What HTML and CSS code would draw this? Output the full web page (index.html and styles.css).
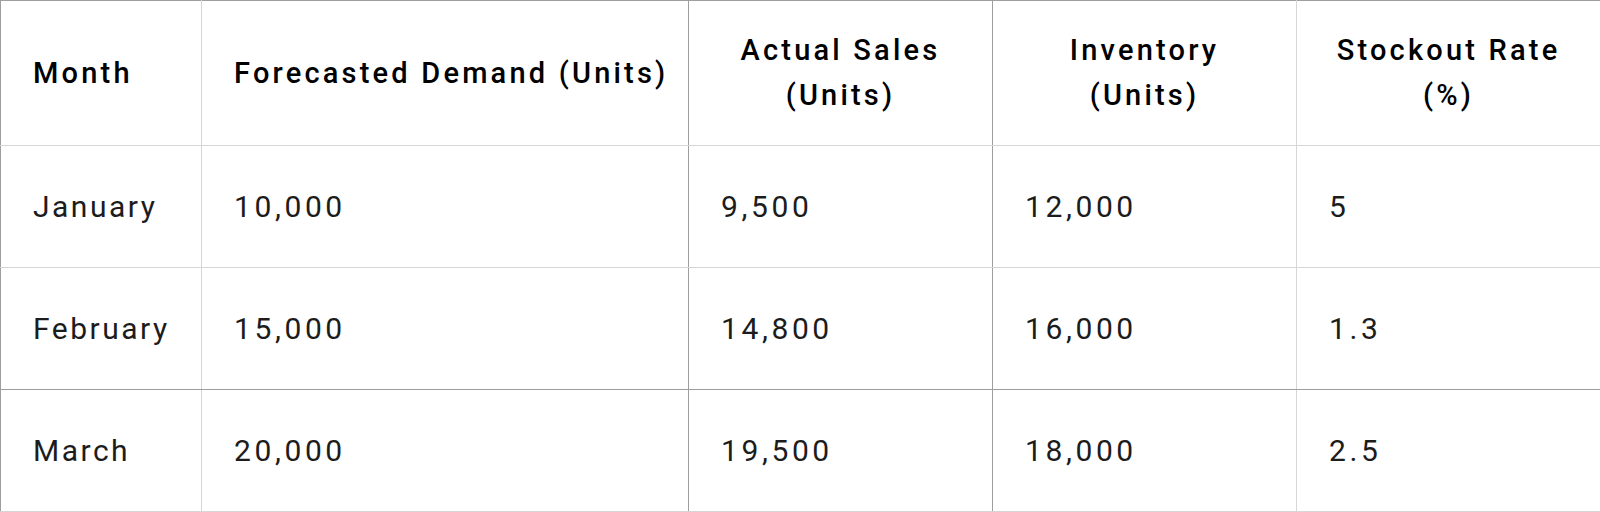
FILE: index.html
```html
<!DOCTYPE html>
<html lang="en">
<head>
<meta charset="utf-8">
<title>Demand Forecast</title>
<link rel="stylesheet" href="styles.css">
</head>
<body>
<table class="data">
  <colgroup>
    <col class="c-month">
    <col class="c-forecast">
    <col class="c-num">
    <col class="c-num">
    <col class="c-num">
  </colgroup>
  <thead>
    <tr class="head-row">
      <th class="left light">Month</th>
      <th class="left dark">Forecasted Demand (Units)</th>
      <th class="center dark">Actual Sales<br>(Units)</th>
      <th class="center light">Inventory<br>(Units)</th>
      <th class="center dark-r">Stockout Rate<br>(%)</th>
    </tr>
  </thead>
  <tbody>
    <tr class="row light-b">
      <td class="light">January</td>
      <td class="dark num">10,000</td>
      <td class="dark num">9,500</td>
      <td class="light num">12,000</td>
      <td class="dark-r num">5</td>
    </tr>
    <tr class="row dark-b">
      <td class="light">February</td>
      <td class="dark num">15,000</td>
      <td class="dark num">14,800</td>
      <td class="light num">16,000</td>
      <td class="dark-r num">1.3</td>
    </tr>
    <tr class="row light-b">
      <td class="light">March</td>
      <td class="dark num">20,000</td>
      <td class="dark num">19,500</td>
      <td class="light num">18,000</td>
      <td class="dark-r num">2.5</td>
    </tr>
  </tbody>
</table>
</body>
</html>
```
FILE: styles.css
```css
html, body {
  margin: 0;
  padding: 0;
  background: #ffffff;
}

.data {
  width: 1600px;
  table-layout: fixed;
  border-collapse: collapse;
  font-family: Roboto, "Liberation Sans", sans-serif;
  color: #1c1c1c;
  border-top: 1px solid #9e9e9e;
  border-left: 1px solid #9e9e9e;
}

.c-month { width: 201px; }
.c-forecast { width: 487px; }
.c-num { width: 304px; }

th, td {
  padding: 0 32px;
  border-bottom: 1px solid #d6d6d6;
  vertical-align: middle;
  white-space: nowrap;
}

th {
  height: 144px;
  font-size: 29px;
  font-weight: 500;
  letter-spacing: 3.2px;
  line-height: 45px;
  color: #000000;
}

td {
  height: 121px;
  font-size: 30px;
  font-weight: 400;
  letter-spacing: 2.5px;
  text-align: left;
}

td.num { letter-spacing: 3.6px; }

.left { text-align: left; }
.center { text-align: center; }

th.light, td.light { border-right: 1px solid #d6d6d6; }
th.dark, td.dark { border-right: 1px solid #9e9e9e; }
th.dark-r, td.dark-r { border-right: 1px solid #9e9e9e; }

.dark-b td { border-bottom: 1px solid #9e9e9e; }
.light-b td { border-bottom: 1px solid #d6d6d6; }
```
